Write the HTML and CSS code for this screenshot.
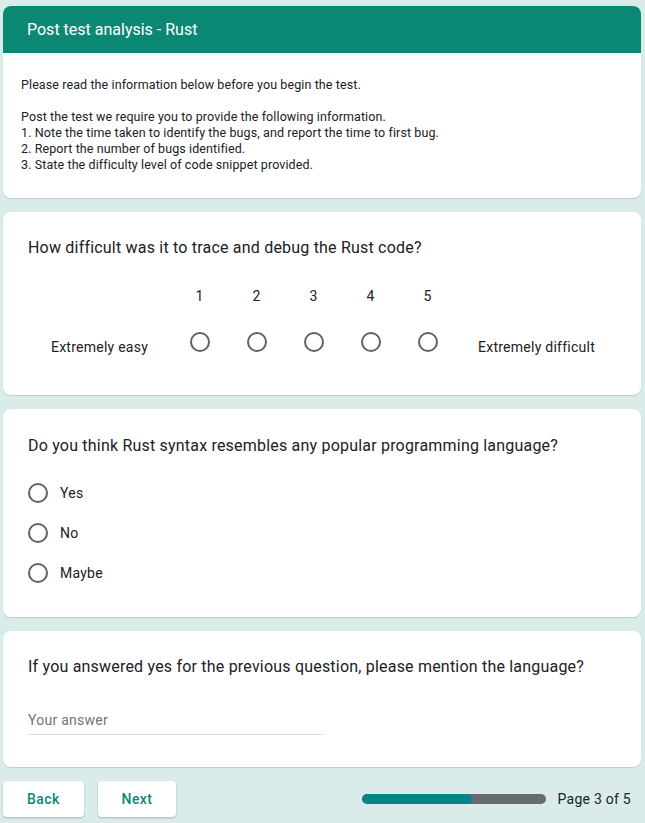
FILE: index.html
```html
<!DOCTYPE html>
<html lang="en">
<head>
<meta charset="utf-8">
<title>Post test analysis - Rust</title>
<link rel="stylesheet" href="styles.css">
</head>
<body>
<div class="page">
  <section class="card intro">
    <div class="intro-head">Post test analysis - Rust</div>
    <div class="intro-body">
      <p>Please read the information below before you begin the test.</p>
      <p class="blank">&nbsp;</p>
      <p>Post the test we require you to provide the following information.</p>
      <p>1. Note the time taken to identify the bugs, and report the time to first bug.</p>
      <p>2. Report the number of bugs identified.</p>
      <p>3. State the difficulty level of code snippet provided.</p>
    </div>
  </section>

  <section class="card q q-scale">
    <div class="q-title">How difficult was it to trace and debug the Rust code?</div>
    <div class="scale-nums">
      <div class="scale-side"></div>
      <div class="scale-cell">1</div>
      <div class="scale-cell">2</div>
      <div class="scale-cell">3</div>
      <div class="scale-cell">4</div>
      <div class="scale-cell">5</div>
      <div class="scale-side right"></div>
    </div>
    <div class="scale-row">
      <div class="scale-side label">Extremely easy</div>
      <div class="scale-cell"><span class="radio"></span></div>
      <div class="scale-cell"><span class="radio"></span></div>
      <div class="scale-cell"><span class="radio"></span></div>
      <div class="scale-cell"><span class="radio"></span></div>
      <div class="scale-cell"><span class="radio"></span></div>
      <div class="scale-side right label">Extremely difficult</div>
    </div>
  </section>

  <section class="card q q-choice">
    <div class="q-title">Do you think Rust syntax resembles any popular programming language?</div>
    <div class="options">
      <div class="option"><span class="radio"></span><span class="opt-label">Yes</span></div>
      <div class="option"><span class="radio"></span><span class="opt-label">No</span></div>
      <div class="option"><span class="radio"></span><span class="opt-label">Maybe</span></div>
    </div>
  </section>

  <section class="card q q-text">
    <div class="q-title">If you answered yes for the previous question, please mention the language?</div>
    <div class="answer"><span class="placeholder">Your answer</span></div>
  </section>

  <div class="nav">
    <div class="btn">Back</div>
    <div class="btn">Next</div>
    <div class="spacer"></div>
    <div class="progress"><div class="progress-fill" style="width:60%"></div></div>
    <div class="page-count">Page 3 of 5</div>
  </div>
</div>
</body>
</html>
```

FILE: styles.css
```css
html, body {
  margin: 0;
  padding: 0;
  background: #d9ecea;
}
body {
  font-family: Roboto, "Noto Sans", Arial, sans-serif;
  color: #202124;
}
.page {
  display: flex;
  flex-direction: column;
  gap: 14px;
  padding: 6px 4px 6px 3px;
}
.card {
  background: #ffffff;
  border-radius: 8px;
  box-shadow: 0 1px 1px rgba(60, 64, 67, 0.18);
}
.intro {
  overflow: hidden;
}
.intro-head {
  height: 47px;
  background: #0b8874;
  color: #ffffff;
  font-size: 16px;
  line-height: 48px;
  padding-left: 24px;
}
.intro-body {
  padding: 24px 24px 25px 18px;
  font-size: 12.5px;
  line-height: 16px;
  letter-spacing: 0.1px;
}
.intro-body p {
  margin: 0;
}
.q {
  padding: 24px 24px 0 25px;
}
.q-title {
  font-size: 16px;
  line-height: 24px;
  letter-spacing: 0.2px;
}
.q-scale {
  padding-bottom: 38px;
}
.scale-nums, .scale-row {
  display: flex;
  font-size: 14px;
  line-height: 20px;
  letter-spacing: 0.25px;
}
.scale-nums {
  margin-top: 26px;
}
.scale-row {
  margin-top: 26px;
  align-items: flex-start;
}
.scale-side {
  width: 143px;
  text-align: center;
  flex: none;
}
.scale-side.right {
  width: 161px;
}
.scale-side.label {
  padding-top: 5px;
}
.scale-cell {
  width: 57px;
  flex: none;
  display: flex;
  justify-content: center;
  height: 20px;
}
.radio {
  display: block;
  width: 20px;
  height: 20px;
  box-sizing: border-box;
  border: 2px solid #5f6368;
  border-radius: 50%;
  flex: none;
}
.q-choice {
  padding-top: 25px;
  padding-bottom: 24px;
}
.options {
  margin-top: 15px;
}
.option {
  display: flex;
  align-items: center;
  height: 40px;
  gap: 12px;
  font-size: 14px;
  letter-spacing: 0.25px;
}
.q-text {
  padding-top: 24px;
  padding-bottom: 32px;
}
.answer {
  margin-top: 31px;
  width: 295px;
  border-bottom: 1px solid #dadce0;
  padding-bottom: 4px;
  font-size: 14px;
  line-height: 20px;
  letter-spacing: 0.25px;
}
.placeholder {
  color: #70757a;
}
.nav {
  display: flex;
  align-items: center;
  gap: 14px;
}
.btn {
  background: #ffffff;
  border-radius: 4px;
  box-shadow: 0 1px 2px rgba(60, 64, 67, 0.3);
  height: 36px;
  line-height: 36px;
  padding: 0 24px;
  font-size: 14px;
  font-weight: 500;
  color: #0b8874;
  letter-spacing: 0.4px;
}
.spacer {
  flex: 1;
}
.progress {
  width: 184px;
  height: 10px;
  border-radius: 5px;
  background: #686b72;
  overflow: hidden;
}
.progress-fill {
  height: 100%;
  background: #07838a;
  border-radius: 5px;
}
.page-count {
  font-size: 14px;
  letter-spacing: 0.25px;
  margin-right: 10px;
  margin-left: -2px;
}
```
